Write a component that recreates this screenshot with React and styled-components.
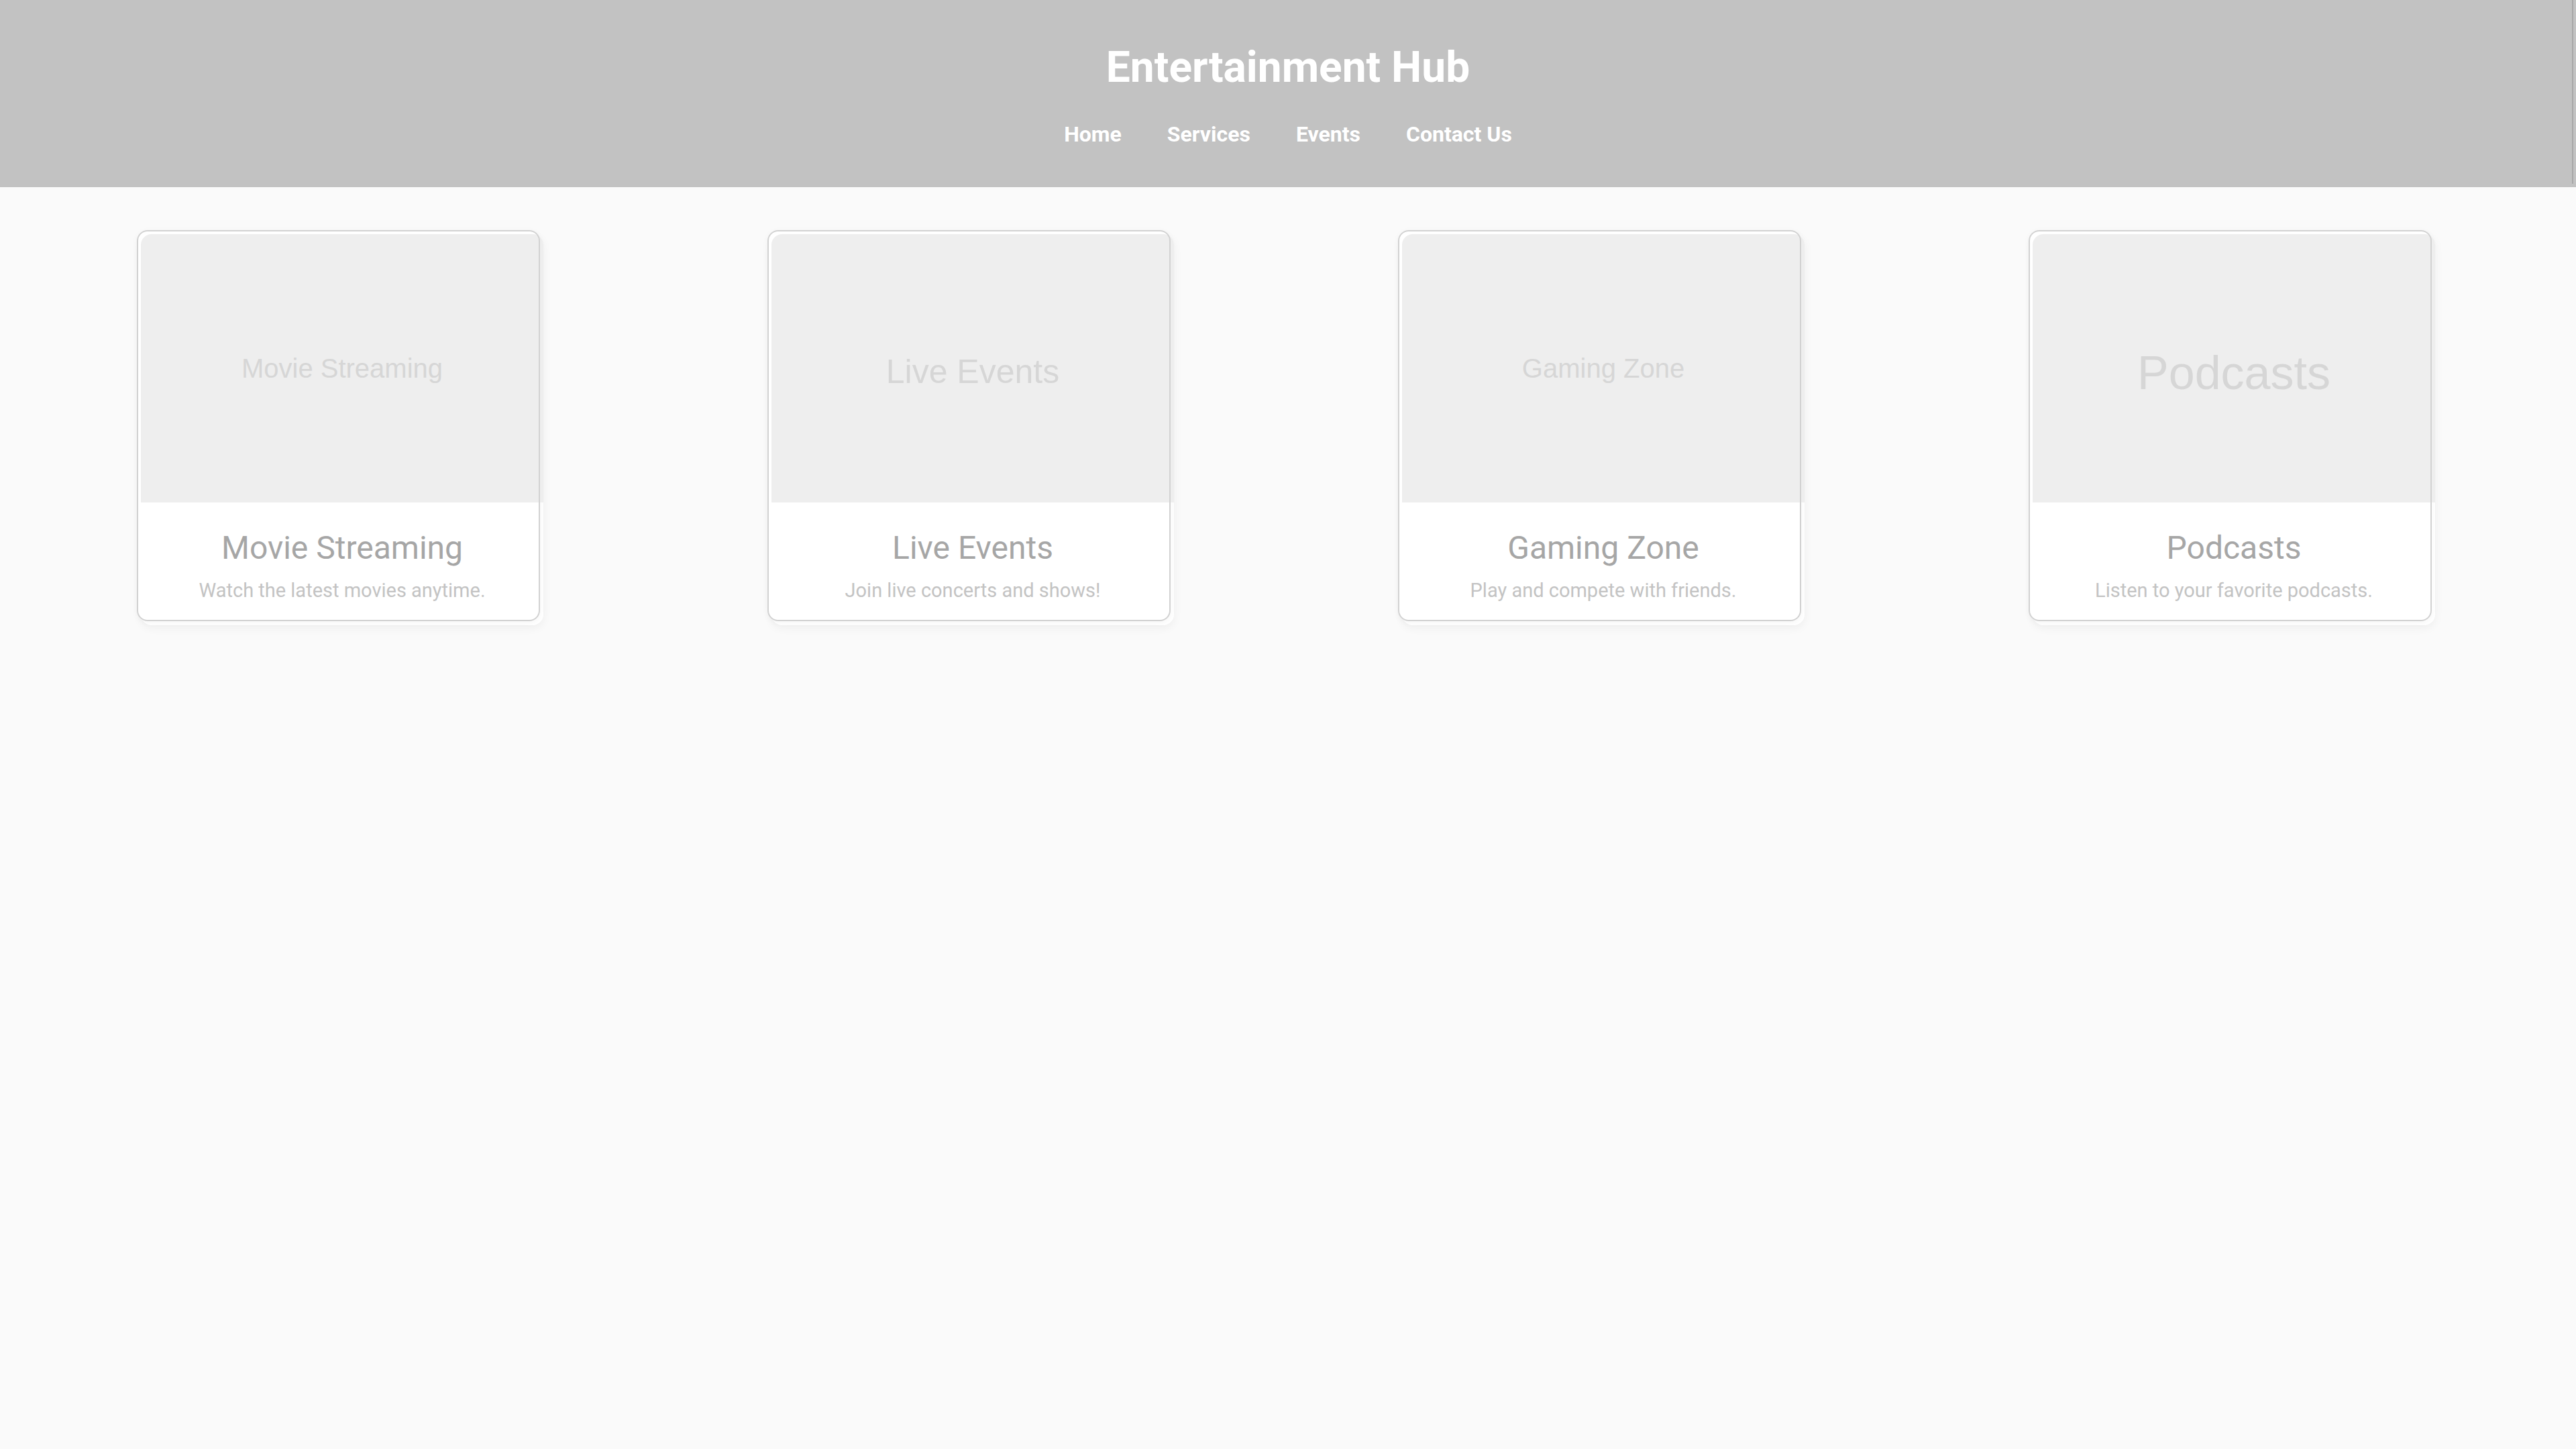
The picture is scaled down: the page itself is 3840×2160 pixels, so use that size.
import React from "react";
import styled, { createGlobalStyle } from "styled-components";

const GlobalStyle = createGlobalStyle`
  html, body {
    margin: 0;
    padding: 0;
    background: #fafafa;
    font-family: Roboto, "Liberation Sans", Arial, sans-serif;
  }
  * { box-sizing: border-box; }
`;

const Page = styled.div`
  min-height: 2160px;
  background: #fafafa;
`;

const Header = styled.header`
  position: relative;
  background: #c2c2c2;
  height: 279px;
  padding-top: 63px;
  display: flex;
  flex-direction: column;
  align-items: center;
  color: #ffffff;
`;

const EdgeLine = styled.span`
  position: absolute;
  top: 0;
  right: 4px;
  bottom: 5px;
  width: 2px;
  background: #a8a8a8;
`;

const Title = styled.h1`
  margin: 0;
  font-size: 64px;
  font-weight: 700;
  line-height: 75px;
`;

const Nav = styled.nav`
  margin-top: 44px;
  display: flex;
  gap: 68px;
`;

const NavLink = styled.a`
  color: #ffffff;
  font-size: 32px;
  font-weight: 700;
  line-height: 37px;
  text-decoration: none;
`;

const Main = styled.main`
  display: flex;
  justify-content: space-around;
  padding: 70px 40px;
`;

const Card = styled.article`
  position: relative;
  z-index: 0;
  width: 600px;
  background: #ffffff;
  border-radius: 16px;
  box-shadow: 0 4px 14px rgba(0, 0, 0, 0.05);

  &::before {
    content: "";
    position: absolute;
    top: -6px;
    left: -6px;
    right: 5px;
    bottom: 6px;
    background: #ffffff;
    border-radius: 16px;
    z-index: -1;
    box-shadow: 0 2px 10px rgba(0, 0, 0, 0.04);
  }

  &::after {
    content: "";
    position: absolute;
    top: -6px;
    left: -6px;
    right: 5px;
    bottom: 6px;
    border: 2px solid #d2d2d2;
    border-radius: 16px;
    pointer-events: none;
  }
`;

const Thumb = styled.div`
  height: 400px;
  padding-top: ${(p) => p.$shift}px;
  background: #eeeeee;
  border-radius: 16px 16px 0 0;
  display: flex;
  align-items: center;
  justify-content: center;
  color: #d6d6d6;
  font-family: "Liberation Sans", Arial, sans-serif;
  font-size: ${(p) => p.$size}px;
`;

const Body = styled.div`
  padding: 40px 30px 35px;
  text-align: center;
`;

const CardTitle = styled.h3`
  margin: 0 0 19px;
  font-size: 48px;
  font-weight: 400;
  line-height: 56px;
  color: #a6a6a6;
`;

const CardText = styled.p`
  margin: 0;
  font-size: 29px;
  line-height: 33px;
  color: #c3c3c3;
`;

const items = [
  { title: "Movie Streaming", text: "Watch the latest movies anytime.", size: 40, shift: 0 },
  { title: "Live Events", text: "Join live concerts and shows!", size: 50, shift: 10 },
  { title: "Gaming Zone", text: "Play and compete with friends.", size: 40, shift: 0 },
  { title: "Podcasts", text: "Listen to your favorite podcasts.", size: 70, shift: 14 },
];

export default function App() {
  return (
    <Page>
      <GlobalStyle />
      <Header>
        <Title>Entertainment Hub</Title>
        <Nav>
          <NavLink href="#">Home</NavLink>
          <NavLink href="#">Services</NavLink>
          <NavLink href="#">Events</NavLink>
          <NavLink href="#">Contact Us</NavLink>
        </Nav>
        <EdgeLine />
      </Header>
      <Main>
        {items.map((it) => (
          <Card key={it.title}>
            <Thumb $size={it.size} $shift={it.shift}>{it.title}</Thumb>
            <Body>
              <CardTitle>{it.title}</CardTitle>
              <CardText>{it.text}</CardText>
            </Body>
          </Card>
        ))}
      </Main>
    </Page>
  );
}
